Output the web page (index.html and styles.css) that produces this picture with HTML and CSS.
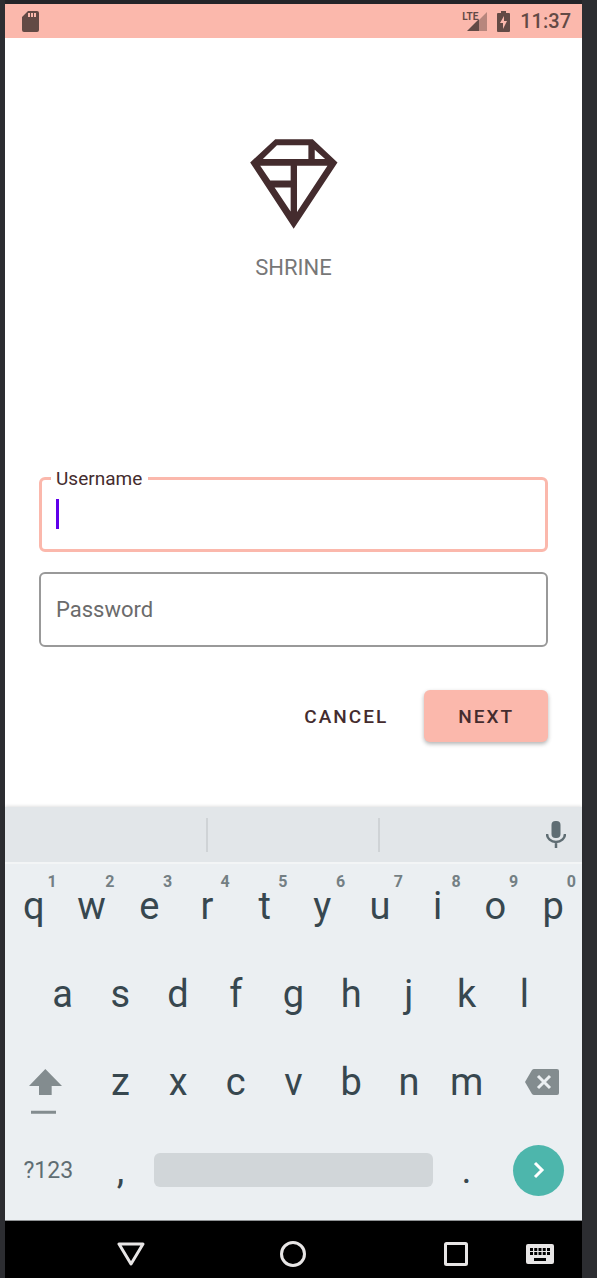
FILE: index.html
```html
<!DOCTYPE html>
<html lang="en">
<head>
<meta charset="utf-8">
<meta name="viewport" content="width=device-width, initial-scale=1">
<title>Shrine</title>
<link rel="stylesheet" href="styles.css">
</head>
<body>
<div class="phone">
  <header class="status">
    <svg class="status-sd" width="17" height="21" viewBox="0 0 17 21" aria-hidden="true">
      <path fill-rule="evenodd" d="M6 0H15Q17 0 17 2V19Q17 21 15 21H2Q0 21 0 19V6ZM6 2V6H8V2ZM9 2V6H11V2ZM12 2V6H14V2Z"/>
    </svg>
    <div class="status-right">
      <div class="signal">
        <svg width="20" height="19" viewBox="0 0 20 19" aria-hidden="true">
          <path opacity=".45" d="M12 8L20 0V19H12Z"/>
          <path d="M0 19L12 7V19Z"/>
        </svg>
        <span class="signal-type">LTE</span>
      </div>
      <svg width="13" height="21" viewBox="0 0 13 21" aria-hidden="true">
        <path fill-rule="evenodd" d="M4 0H9V2H12Q13 2 13 3V20Q13 21 12 21H1Q0 21 0 20V3Q0 2 1 2H4ZM7 5L3 12H6V18L10 10H7Z"/>
      </svg>
      <time class="clock">11:37</time>
    </div>
  </header>

  <main class="login">
    <svg class="logo" width="88" height="90" viewBox="60 41 262 269" role="img" aria-label="Shrine logo">
      <path fill-rule="evenodd" d="M135 42H247L321 111L190 309L60 111ZM140 60L98 101H234V60ZM253 73V101H284ZM90 121L120 165H181V121ZM133 186L181 258V186ZM200 121V259L291 121Z"/>
    </svg>
    <h1 class="brand">SHRINE</h1>
    <form class="form">
      <div class="field field-active">
        <label class="label-float" for="username">Username</label>
        <input class="input" id="username" type="text" autocomplete="off">
        <span class="caret"></span>
      </div>
      <div class="field">
        <input class="input" id="password" type="password" placeholder="Password" aria-label="Password">
      </div>
      <div class="actions">
        <button class="btn" type="button">CANCEL</button>
        <button class="btn btn-primary" type="button">NEXT</button>
      </div>
    </form>
  </main>

  <section class="keyboard" aria-label="Keyboard">
    <div class="suggestions">
      <span class="suggestion"></span>
      <span class="suggestion"></span>
      <button class="mic" type="button" aria-label="Voice input">
        <svg width="20" height="27" viewBox="0 0 20 27" aria-hidden="true">
          <rect x="5.500" y="0" width="9" height="17" rx="4" fill="#5f6d73"/>
          <path d="M1 13A9 8 0 0 0 19 13M10 21V27" fill="none" stroke="#5f6d73" stroke-width="2.500"/>
        </svg>
      </button>
    </div>
    <div class="row">
      <button class="key" type="button">q<sup class="hint">1</sup></button>
      <button class="key" type="button">w<sup class="hint">2</sup></button>
      <button class="key" type="button">e<sup class="hint">3</sup></button>
      <button class="key" type="button">r<sup class="hint">4</sup></button>
      <button class="key" type="button">t<sup class="hint">5</sup></button>
      <button class="key" type="button">y<sup class="hint">6</sup></button>
      <button class="key" type="button">u<sup class="hint">7</sup></button>
      <button class="key" type="button">i<sup class="hint">8</sup></button>
      <button class="key" type="button">o<sup class="hint">9</sup></button>
      <button class="key" type="button">p<sup class="hint">0</sup></button>
    </div>
    <div class="row row-inset">
      <button class="key" type="button">a</button>
      <button class="key" type="button">s</button>
      <button class="key" type="button">d</button>
      <button class="key" type="button">f</button>
      <button class="key" type="button">g</button>
      <button class="key" type="button">h</button>
      <button class="key" type="button">j</button>
      <button class="key" type="button">k</button>
      <button class="key" type="button">l</button>
    </div>
    <div class="row">
      <button class="key key-side key-shift" type="button" aria-label="Shift">
        <svg width="33" height="46" viewBox="87 87 99 138" aria-hidden="true">
          <path fill="#838c8f" d="M136 87L186 138H155V165H117V138H87ZM93 212H168V221H93Z"/>
        </svg>
      </button>
      <button class="key" type="button">z</button>
      <button class="key" type="button">x</button>
      <button class="key" type="button">c</button>
      <button class="key" type="button">v</button>
      <button class="key" type="button">b</button>
      <button class="key" type="button">n</button>
      <button class="key" type="button">m</button>
      <button class="key key-side key-delete" type="button" aria-label="Delete">
        <svg width="34" height="26" viewBox="0 0 34 26" aria-hidden="true">
          <path fill="#838c8f" d="M9 0H32Q34 0 34 2V24Q34 26 32 26H9Q8 26 7 25L0 13L7 1Q8 0 9 0Z"/>
          <path d="M13 7L25 19M25 7L13 19" stroke="#ebeff2" stroke-width="3"/>
        </svg>
      </button>
    </div>
    <div class="row">
      <button class="key key-side key-symbols" type="button">?123</button>
      <button class="key" type="button">,</button>
      <button class="key key-space" type="button" aria-label="Space"><span class="space-bar"></span></button>
      <button class="key" type="button">.</button>
      <button class="key key-side" type="button" aria-label="Next field">
        <span class="enter">
          <svg width="12" height="18" viewBox="0 0 12 18" aria-hidden="true">
            <path d="M2 2L9 9L2 16" fill="none" stroke="#fff" stroke-width="3"/>
          </svg>
        </span>
      </button>
    </div>
  </section>

  <nav class="navbar" aria-label="System">
    <button class="nav-btn" type="button" aria-label="Back">
      <svg width="28" height="24" viewBox="0 0 28 24" aria-hidden="true"><path d="M2 2H26L14 22Z" fill="none" stroke="#e8e6e6" stroke-width="3" stroke-linejoin="round"/></svg>
    </button>
    <button class="nav-btn" type="button" aria-label="Home">
      <svg width="28" height="28" viewBox="0 0 28 28" aria-hidden="true"><circle cx="14" cy="14" r="11.500" fill="none" stroke="#e8e6e6" stroke-width="3"/></svg>
    </button>
    <button class="nav-btn" type="button" aria-label="Recent apps">
      <svg width="24" height="24" viewBox="0 0 24 24" aria-hidden="true"><rect x="1.500" y="1.500" width="21" height="21" rx="1" fill="none" stroke="#e8e6e6" stroke-width="3"/></svg>
    </button>
    <button class="nav-btn" type="button" aria-label="Switch keyboard">
      <svg width="28" height="20" viewBox="0 0 28 20" aria-hidden="true">
        <rect width="28" height="20" rx="2" fill="#e8e6e6"/>
        <path d="M4 5.500H24M4 9.500H24" stroke="#000" stroke-width="3" stroke-dasharray="3 1.250"/>
        <path d="M8 15.500H20" stroke="#000" stroke-width="3"/>
      </svg>
    </button>
  </nav>
</div>
</body>
</html>
```
FILE: styles.css
```css
* {
  box-sizing: border-box;
}

body {
  margin: 0;
  background: #2c2d31;
  font-family: Roboto, "Liberation Sans", sans-serif;
  color: #442c2e;
}

button {
  margin: 0;
  padding: 0;
  border: 0;
  background: none;
  color: inherit;
  font: inherit;
}

svg {
  display: block;
  flex: none;
}

.phone {
  display: flex;
  flex-direction: column;
  min-height: 100vh;
  margin: 0 15px 0 5px;
  border-top: 4px solid #232428;
  background: #fff;
}

/* Status bar */
.status {
  display: flex;
  align-items: center;
  justify-content: space-between;
  height: 34px;
  padding: 0 11px 0 17px;
  background: #fbb8ac;
  color: #634a45;
  fill: #634a45;
}

.status-right {
  display: flex;
  align-items: center;
  gap: 10px;
}

.signal {
  position: relative;
}

.signal-type {
  position: absolute;
  top: 0;
  left: -5px;
  font: bold 10px/10px Roboto, "Liberation Sans", sans-serif;
}

.clock {
  font-size: 20px;
  font-weight: 500;
  line-height: 24px;
}

/* Login */
.login {
  display: flex;
  flex: 1;
  flex-direction: column;
  padding: 101px 34px 64px;
}

.logo {
  align-self: center;
  fill: #442c2e;
}

.brand {
  margin: 25px 0 195px;
  color: #777;
  font-size: 22px;
  font-weight: 400;
  line-height: 28px;
  text-align: center;
}

.form {
  display: flex;
  flex-direction: column;
  gap: 20px;
}

.field {
  position: relative;
  height: 75px;
  border: 2px solid #999;
  border-radius: 6px;
}

.field-active {
  border: 3px solid #fbb8ac;
}

.label-float {
  position: absolute;
  top: -13px;
  left: 9px;
  padding: 0 6px 0 5px;
  background: #fff;
  font-size: 19px;
  line-height: 24px;
}

.input {
  width: 100%;
  height: 100%;
  padding: 0 15px;
  border: 0;
  outline: 0;
  background: transparent;
  color: #442c2e;
  font: 22px Roboto, "Liberation Sans", sans-serif;
}

.input::placeholder {
  color: #6b6b6b;
  opacity: 1;
}

.caret {
  position: absolute;
  top: 19px;
  left: 14px;
  width: 3px;
  height: 30px;
  background: #5f00ea;
}

.actions {
  display: flex;
  justify-content: flex-end;
  gap: 2px;
  padding-top: 23px;
}

.btn {
  height: 52px;
  padding: 0 34px;
  border-radius: 6px;
  font-size: 19px;
  font-weight: 500;
  letter-spacing: 2px;
}

.btn-primary {
  background: #fbb8ac;
  box-shadow: 0 2px 4px rgba(0, 0, 0, 0.3);
}

/* Keyboard */
.keyboard {
  padding-bottom: 6px;
  background: #ebeff2;
  box-shadow: 0 -1px 3px rgba(0, 0, 0, 0.12);
}

.suggestions {
  display: grid;
  grid-template-columns: 203fr 172fr 202fr;
  align-items: center;
  height: 55px;
  background: #e2e6e9;
  box-shadow: 0 2px 0 #f3f5f6;
}

.suggestion {
  height: 34px;
  border-right: 2px solid #cfd3d6;
}

.mic {
  display: flex;
  justify-content: flex-end;
  padding-right: 16px;
}

.row {
  display: grid;
  grid-template-columns: repeat(20, minmax(0, 1fr));
  height: 88px;
}

.row-inset {
  grid-template-columns: repeat(18, minmax(0, 1fr));
  padding: 0 5%;
}

.key {
  position: relative;
  display: flex;
  grid-column: span 2;
  align-items: center;
  justify-content: center;
  color: #37474f;
  font-size: 38px;
}

.key-side {
  grid-column: span 3;
}

.key-shift {
  align-items: flex-start;
  justify-content: flex-start;
  padding: 31px 0 0 24px;
}

.key-delete {
  justify-content: flex-end;
  padding-right: 23px;
}

.key-symbols {
  color: #5f6d73;
  font-size: 23px;
}

.key-space {
  grid-column: span 10;
  padding: 0 5px;
}

.space-bar {
  width: 100%;
  height: 34px;
  border-radius: 6px;
  background: #d1d6d9;
}

.hint {
  position: absolute;
  top: 10px;
  right: 6px;
  color: #747f84;
  font-size: 16px;
  font-weight: 700;
  line-height: 20px;
}

.enter {
  display: flex;
  align-items: center;
  justify-content: center;
  width: 51px;
  height: 51px;
  border-radius: 50%;
  background: #4db6ac;
}

/* System navigation */
.navbar {
  display: grid;
  grid-template-columns: 162fr 163fr 84fr 67fr;
  align-items: center;
  height: 58px;
  padding: 8px 0 0 101px;
  border-top: 1px solid #8f9294;
  background: #000;
}

.nav-btn {
  display: flex;
  align-items: center;
  justify-content: center;
  width: 50px;
  height: 48px;
}
```
